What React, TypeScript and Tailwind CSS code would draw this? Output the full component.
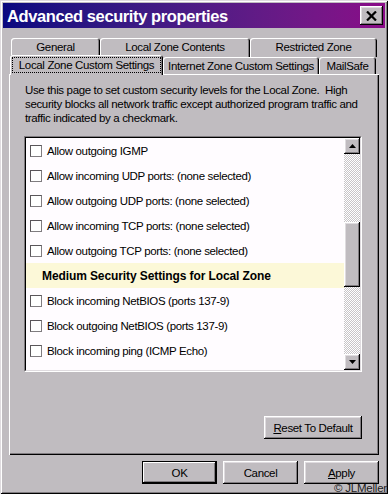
import React from "react";

const raised =
  "shadow-[inset_-1px_-1px_0_0_#000,inset_1px_1px_0_0_#fff,inset_-2px_-2px_0_0_#807c80,inset_2px_2px_0_0_#dfdbdf]";

const rows = [
  "Allow outgoing IGMP",
  "Allow incoming UDP ports: (none selected)",
  "Allow outgoing UDP ports: (none selected)",
  "Allow incoming TCP ports: (none selected)",
  "Allow outgoing TCP ports: (none selected)",
];

const rows2 = [
  "Block incoming NetBIOS (ports 137-9)",
  "Block outgoing NetBIOS (ports 137-9)",
  "Block incoming ping (ICMP Echo)",
];

function Check() {
  return (
    <span className="h-[12px] w-[12px] shrink-0 border border-[#807c80] border-t-[#5a565a] border-l-[#5a565a] bg-white" />
  );
}

function Row({ label }: { label?: string }) {
  return (
    <div className="flex h-[25px] shrink-0 items-center gap-[5px] pl-[4px]">
      <Check />
      {label && <span className="whitespace-nowrap">{label}</span>}
    </div>
  );
}

function Arrow({ down }: { down?: boolean }) {
  return (
    <div className={`flex h-[16px] w-[16px] shrink-0 items-center justify-center bg-[#c0bcc0] ${raised}`}>
      <svg width="7" height="4" viewBox="0 0 7 4">
        <path d={down ? "M0 0H7L3.5 4Z" : "M0 4H7L3.5 0Z"} fill="#000" />
      </svg>
    </div>
  );
}

function Tab({ label, w, className = "" }: { label: string; w: string; className?: string }) {
  return (
    <div
      className={`flex items-center justify-center whitespace-nowrap rounded-t-[3px] bg-[#c0bcc0] shadow-[inset_1px_1px_0_0_#fff,inset_-1px_0_0_0_#000,inset_-2px_0_0_0_#807c80] ${w} ${className}`}
    >
      {label}
    </div>
  );
}

function Button({ children, w, def }: { children: React.ReactNode; w: string; def?: boolean }) {
  return (
    <div
      className={`flex h-[23px] items-center justify-center whitespace-nowrap bg-[#c0bcc0] ${w} ${
        def
          ? "border border-black shadow-[inset_-1px_-1px_0_0_#000,inset_1px_1px_0_0_#fff,inset_-2px_-2px_0_0_#807c80]"
          : raised
      }`}
    >
      {children}
    </div>
  );
}

export default function App() {
  return (
    <div className="relative h-[494px] w-[388px] overflow-hidden bg-[#c0bcc0] p-[3px] font-['Liberation_Sans',Arial,sans-serif] text-[11.5px] leading-[14px] tracking-[-0.35px] text-black shadow-[inset_1px_1px_0_0_#dfdbdf,inset_-1px_-1px_0_0_#000,inset_2px_2px_0_0_#fff,inset_-2px_-2px_0_0_#807c80]">
      {/* title bar */}
      <div className="flex h-[25px] items-center justify-between bg-gradient-to-r from-[#0a0880] to-[#8a0a88] pl-[4px] pr-[2px]">
        <span className="whitespace-nowrap text-[16.5px] font-bold tracking-[-0.4px] text-white">
          Advanced security properties
        </span>
        <div className={`flex h-[19px] w-[23px] items-center justify-center bg-[#c0bcc0] ${raised}`}>
          <svg width="11" height="10" viewBox="0 0 11 10">
            <path d="M1 0.5L10 9.5M10 0.5L1 9.5" stroke="#000" strokeWidth="2.2" />
          </svg>
        </div>
      </div>

      <div className="px-[6px]">
        {/* tabs */}
        <div className="mt-[10px] flex h-[17px] pl-[2px]">
          <Tab label="General" w="w-[89px]" className="h-[19px] pb-[1px]" />
          <Tab label="Local Zone Contents" w="w-[150px]" className="h-[19px] pb-[1px]" />
          <Tab label="Restricted Zone" w="w-[127px]" className="h-[19px] pb-[1px]" />
        </div>
        <div className="flex h-[19px] pl-[1px]">
          <div className="relative z-10 flex h-[20px] w-[153px] rounded-t-[3px] bg-[#c0bcc0] p-[2px] shadow-[inset_1px_1px_0_0_#fff,inset_-1px_0_0_0_#000,inset_-2px_0_0_0_#807c80]">
            <div className="flex flex-1 items-center justify-center whitespace-nowrap border border-dotted border-black pb-[1px]">
              Local Zone Custom Settings
            </div>
          </div>
          <Tab label="Internet Zone Custom Settings" w="w-[156px]" className="mt-[2px] h-[17px]" />
          <Tab label="MailSafe" w="w-[57px]" className="mt-[2px] h-[17px]" />
        </div>

        {/* panel */}
        <div className="flex h-[381px] flex-col pt-[9px] shadow-[inset_1px_1px_0_0_#fff,inset_-1px_-1px_0_0_#000,inset_-2px_-2px_0_0_#807c80]">
          <p className="whitespace-nowrap pl-[16px]">
            Use this page to set custom security levels for the Local Zone.&nbsp; High
            <br />
            security blocks all network traffic except authorized program traffic and
            <br />
            traffic indicated by a checkmark.
          </p>

          <div className="ml-[15px] mt-[11px] h-[236px] w-[338px] border border-[#807c80] border-b-white border-r-white">
            <div className="flex h-full border border-black border-b-[#dfdbdf] border-r-[#dfdbdf] bg-[#fffcff]">
              <div className="flex flex-1 flex-col overflow-hidden">
                {rows.map((r) => (
                  <Row key={r} label={r} />
                ))}
                <div className="flex h-[25px] shrink-0 items-center whitespace-nowrap bg-[#fcf8d8] pl-[16px] text-[12px] font-bold tracking-[-0.1px]">
                  Medium Security Settings for Local Zone
                </div>
                {rows2.map((r) => (
                  <Row key={r} label={r} />
                ))}
                <Row />
              </div>
              <div className="flex w-[16px] flex-col">
                <Arrow />
                <div className="flex flex-1 flex-col bg-[repeating-conic-gradient(#c8c4c8_0_25%,#fff_0_50%)] bg-[length:2px_2px]">
                  <div className="h-[68px]" />
                  <div className={`h-[65px] bg-[#c0bcc0] ${raised}`} />
                </div>
                <Arrow down />
              </div>
            </div>
          </div>

          <div className="mr-[17px] mt-[44px] flex justify-end">
            <Button w="w-[98px]">
              <span>
                <span className="underline">R</span>eset To Default
              </span>
            </Button>
          </div>
        </div>

        {/* dialog buttons */}
        <div className="mt-[6px] flex justify-end gap-[6px]">
          <Button w="w-[75px]" def>
            OK
          </Button>
          <Button w="w-[75px]">Cancel</Button>
          <Button w="w-[75px]">
            <span>
              <span className="underline">A</span>pply
            </span>
          </Button>
        </div>
      </div>

      <span className="absolute bottom-[0px] right-[1px] text-[11.5px] leading-[11px] tracking-[-0.2px] text-[#202020]">
        © JLMeller
      </span>
    </div>
  );
}
